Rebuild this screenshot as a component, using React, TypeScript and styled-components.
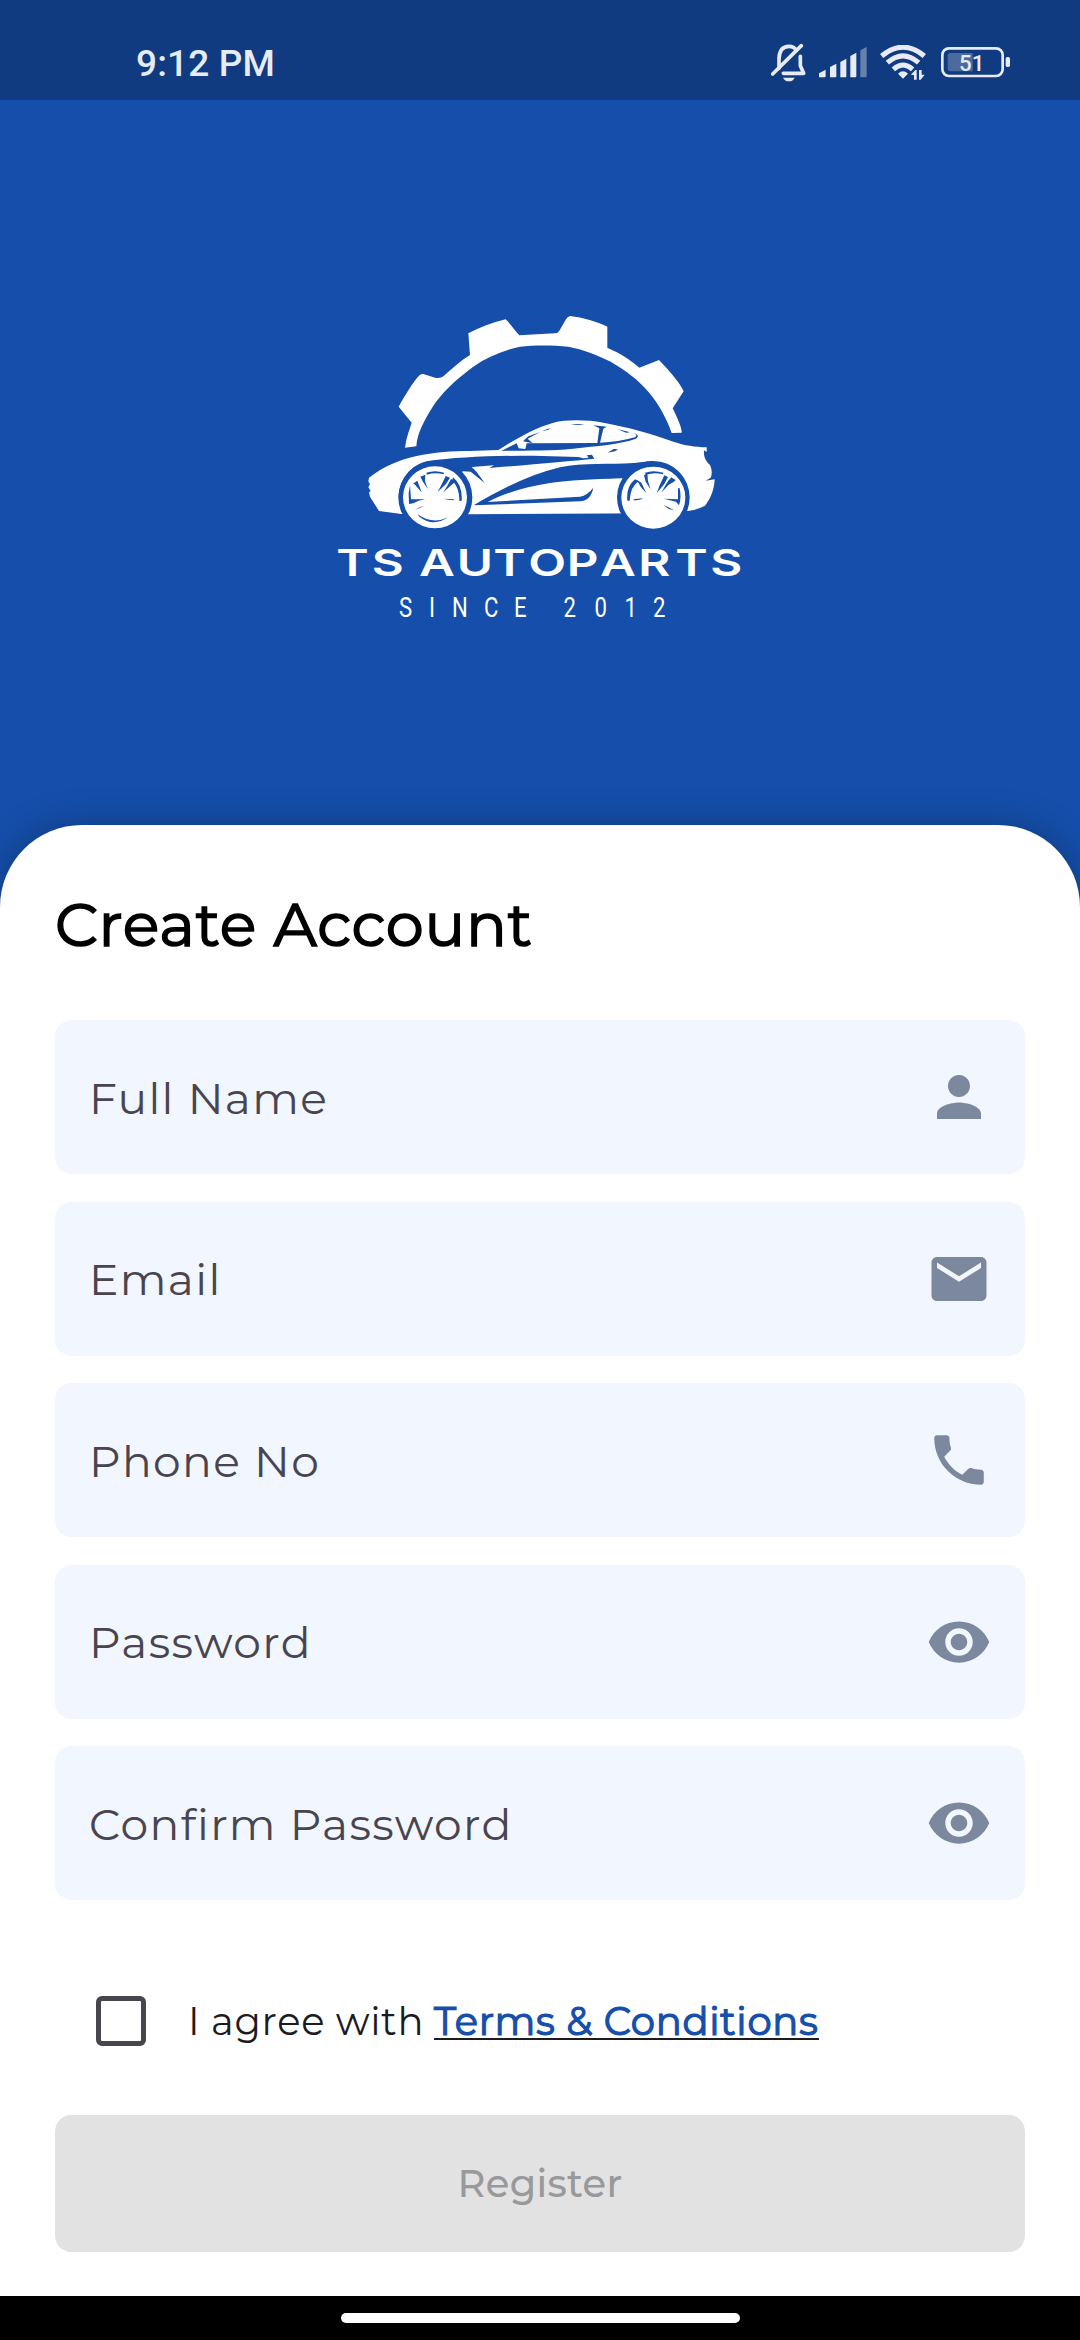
import React from "react";
import styled, { createGlobalStyle } from "styled-components";
import { MdPerson, MdEmail, MdPhone, MdRemoveRedEye } from "react-icons/md";
import type { IconType } from "react-icons";

const GlobalStyle = createGlobalStyle`
  *, *::before, *::after { box-sizing: border-box; }
  body {
    margin: 0;
    background: #154fab;
    font-family: Montserrat, Inter, "Liberation Sans", sans-serif;
  }
`;

const Screen = styled.div`
  display: flex;
  flex-direction: column;
  width: 1080px;
  height: 2340px;
  overflow: hidden;
  background: #154fab;
`;

const StatusBar = styled.header`
  display: flex;
  flex: none;
  align-items: center;
  justify-content: space-between;
  height: 100px;
  padding: 24px 70px 0 136px;
  background: #103b80;
  color: #e7ebf3;
`;

const Clock = styled.time`
  padding-top: 3px;
  font: 500 37px/44px Roboto, sans-serif;
  letter-spacing: 0.15px;
`;

const StatusIcons = styled.div`
  display: flex;
  align-items: center;
  svg { display: block; }
`;

const Hero = styled.div`
  flex: none;
  display: flex;
  justify-content: center;
  height: 725px;
  padding-top: 200px;
`;

const Sheet = styled.main`
  flex: 1;
  display: flex;
  flex-direction: column;
  padding: 0 55px;
  border-radius: 82px 82px 0 0;
  background: #fff;
  box-shadow: 0 0 36px rgba(0, 0, 0, 0.27);
`;

const Title = styled.h1`
  margin: 61px 0 58px;
  height: 76px;
  font-size: 60.5px;
  font-weight: 400;
  line-height: 76px;
  letter-spacing: 0.72px;
  color: #000;
  -webkit-text-stroke: 1.6px #000;
  white-space: nowrap;
`;

const Fields = styled.div`
  display: flex;
  flex-direction: column;
  gap: 27.5px;
`;

const Field = styled.div`
  display: flex;
  align-items: center;
  justify-content: space-between;
  height: 154px;
  padding: 1.4px 33px 0 34px;
  border-radius: 16.5px;
  background: #f1f6ff;
  svg { width: 66px; height: 66px; margin-top: -1.4px; color: #7b889e; }
`;

const FieldLabel = styled.span`
  font-size: 44px;
  font-weight: 400;
  line-height: 54px;
  letter-spacing: 1.375px;
  color: #49454f;
  white-space: nowrap;
`;

const Agreement = styled.div`
  display: flex;
  align-items: center;
  height: 50px;
  margin: 96px 0 0 41px;
`;

const Checkbox = styled.span`
  flex: none;
  width: 50px;
  height: 50px;
  border: 5.5px solid #49454f;
  border-radius: 6px;
`;

const AgreeText = styled.span`
  width: 246px;
  margin-left: 42px;
  padding-top: 2px;
  font-size: 38.5px;
  font-weight: 400;
  line-height: 50px;
  letter-spacing: 0.6875px;
  color: #1c1b1f;
  white-space: nowrap;
`;

const TermsLink = styled.a`
  height: 41px;
  margin-bottom: 3px;
  border-bottom: 2px solid #1c1b1f;
  font-size: 38.5px;
  font-weight: 400;
  line-height: 46px;
  letter-spacing: 0.72px;
  color: #154fab;
  -webkit-text-stroke: 1.2px #154fab;
  white-space: nowrap;
`;

const RegisterButton = styled.button`
  height: 137.5px;
  margin-top: 68.5px;
  padding: 2px 0 0;
  border: 0;
  border-radius: 16.5px;
  background: #e2e2e2;
  color: #98999a;
  font: 500 38.5px/50px Montserrat, Inter, sans-serif;
  letter-spacing: 0.275px;
`;

const NavBar = styled.footer`
  flex: none;
  display: flex;
  justify-content: center;
  height: 44px;
  padding-top: 17px;
  background: #000;
`;

const NavPill = styled.div`
  width: 399px;
  height: 10px;
  border-radius: 5px;
  background: #fff;
`;

const BLUE = "#154fab";

function BellOff() {
  return (
    <svg width="36" height="39" viewBox="0 0 108 117" fill="none">
      <path d="M24 76V48Q25 10 54 10Q69 10 76 22M88 40V68L98 91H37" stroke="#e7ebf3" strokeWidth="11" strokeLinejoin="round" strokeLinecap="round" />
      <path d="M5 93L91 8" stroke="#e7ebf3" strokeWidth="11" strokeLinecap="round" />
      <path d="M36 104H71Q66 115 54 115Q41 115 36 104Z" fill="#e7ebf3" />
    </svg>
  );
}

function Signal() {
  return (
    <svg width="48" height="31" viewBox="0 0 144 93" fill="#e7ebf3">
      <path d="M0 91V79L20 68V88Q20 91 17 91ZM33 91V60L52 50V88Q52 91 49 91ZM64 91V45L82 35V88Q82 91 79 91ZM94 91V27L112 17V88Q112 91 109 91Z" />
      <path d="M124 91V10L143 0V88Q143 91 140 91Z" opacity=".4" />
    </svg>
  );
}

function Wifi() {
  return (
    <svg width="46" height="35" viewBox="0 0 138 105" fill="none" stroke="#e7ebf3" strokeWidth="15">
      <path d="M5 33Q69 -20 133 33" />
      <path d="M22 53Q69 12 116 53" />
      <path d="M40 73Q69 47 98 73" />
      <path d="M54 86Q69 72 84 86L69 101Z" fill="#e7ebf3" stroke="none" />
      <path d="M94 88L106 75H110V104H102V90H94ZM117 75H125V89H134L122 104H117Z" fill="#e7ebf3" stroke="none" />
    </svg>
  );
}

function Battery() {
  return (
    <svg width="69" height="31" viewBox="0 0 207 93">
      <rect x="4" y="4" width="181" height="83" rx="20" fill="none" stroke="#e7ebf3" strokeWidth="8" />
      <path d="M29 18H95V73H29Q20 73 20 64V27Q20 18 29 18Z" fill="#4c6a9e" />
      <rect x="194" y="30" width="13" height="30" rx="5" fill="#e7ebf3" />
      <text x="92" y="71" textAnchor="middle" fontFamily="Roboto, sans-serif" fontSize="67" fontWeight="500" fill="#e7ebf3">51</text>
    </svg>
  );
}

const NAME_SCALE = 1.32;
const nameX = [49, 155, 250, 297, 410, 520, 625, 740, 840, 955, 1066, 1171].map((v) => v / NAME_SCALE).join(" ");
const SINCE_SCALE = 0.8;
const sinceX = [257, 336, 420, 514, 601, 675, 749, 842, 932, 1018].map((v) => v / SINCE_SCALE).join(" ");

function Logo() {
  return (
    <svg width="440" height="330" viewBox="0 0 1320 990" fill="#fff">
      <path d="M255 443L289 439C292 400 310 365 345 310C380 262 420 230 460 200C500 172 545 152 600 140C640 135 700 135 745 140C790 148 830 165 872 185C920 213 955 240 985 275C1015 310 1040 355 1055 399L1085 398C1086 385 1075 360 1058 325L1091 274C1075 240 1040 205 1017 180L958 203C930 178 900 160 862 143V80C830 65 790 52 750 48Q742 50 738 58L718 92Q713 100 705 100L598 106C585 92 572 72 557 58C515 68 480 82 445 100L450 165C420 183 395 208 372 227Q362 236 345 233L310 222Q302 221 297 227C280 245 255 285 236 320L275 368C268 390 258 415 255 443Z" />
      <path d="M147 533C190 500 240 478 290 468C340 457 400 453 450 453L535 450C580 422 640 385 700 368C740 358 800 359 850 368C920 380 1000 403 1060 425C1095 437 1125 440 1160 442V456L1152 451C1150 470 1158 485 1170 495C1177 510 1176 525 1172 533L1157 542L1184 538C1183 570 1170 600 1155 617Q1130 630 1104 633L1000 640L443 643L245 642L177 633L150 590L147 577L152 573L145 562L150 552L145 545Z" />

      <g fill={BLUE}>
        <ellipse cx="346" cy="592" rx="111" ry="111" />
        <ellipse cx="1000" cy="592" rx="109" ry="109" />
        <path d="M236 592C238 530 285 486 330 483C400 472 520 467 640 467L775 471L790 475L806 473L800 466L816 464L823 476C750 483 640 493 508 504L522 496L455 501L470 516L494 549L452 515L428 514L390 570Z" />
        <path d="M461 616C540 568 625 525 720 502C790 487 870 494 940 489C970 486 985 483 1000 483L1000 540L902 535C810 538 750 541 690 549C620 560 560 577 503 606L780 590Q802 586 820 563Q812 602 780 604Z" />
        <path d="M545 452L590 430L596 445L616 447L620 430L832 429L838 385L820 376L860 380L850 386L840 428Q895 426 945 412Q955 404 940 398Q962 406 948 416C900 433 830 438 760 446C690 453 610 451 545 453Z" />
        <path d="M609 424L625 409L661 396L631 412L623 416L638 430Z" />
        <path d="M666 393L691 384L684 390ZM752 373Q772 371 793 374Q772 376 752 373ZM893 387L930 397L918 398ZM863 458L881 447L894 448L885 454Z" />
      </g>

      <ellipse cx="345" cy="592" rx="96" ry="93" />
      <ellipse cx="1000" cy="593" rx="96" ry="93" />

      <g fill={BLUE}>
        <path d="M267 612L266 580L270 556L273 598L316 598Q294 601 280 610ZM279 551L292 542L305 577L290 560Q284 550 279 551ZM301 530L316 524L315 544L324 568L309 545ZM319 518Q345 509 372 518L371 523Q345 516 321 524ZM377 528L390 533L378 552L353 576L366 551ZM393 537L408 543L391 558L370 577L382 557ZM399 532Q428 555 425 603L418 602Q419 565 397 542ZM371 596L403 598L400 601Q384 600 371 596ZM283 630L313 616L300 624ZM293 643Q338 675 384 652Q340 682 298 650Z" />
        <path d="M922 602Q918 560 945 538L956 544Q931 560 929 602ZM950 539L964 548L979 580L962 560ZM972 526L982 520L984 544L992 568L977 545ZM975 518Q1000 509 1030 518L1029 523Q1000 515 978 525ZM1033 526L1044 531L1033 552L1010 580L1019 556ZM1048 538L1062 545L1046 554L1025 577L1037 554ZM1053 532L1067 540L1060 547L1048 543ZM1074 564L1079 565Q1085 595 1077 616L1068 605L1032 596L1074 598ZM940 598L969 595Q960 601 942 601ZM1030 614L1063 631L1046 627Z" />
      </g>

      <text transform={`scale(${NAME_SCALE} 1)`} x={nameX} y="828" fontFamily="Inter, sans-serif" fontSize="112" fontWeight="600" style={{ fontKerning: "none" }}>TS AUTOPARTS</text>
      <text transform={`scale(${SINCE_SCALE} 1)`} x={sinceX} y="951" textAnchor="middle" fontFamily="Roboto, sans-serif" fontSize="83">SINCE 2012</text>
    </svg>
  );
}

const fields: { label: string; Icon: IconType }[] = [
  { label: "Full Name", Icon: MdPerson },
  { label: "Email", Icon: MdEmail },
  { label: "Phone No", Icon: MdPhone },
  { label: "Password", Icon: MdRemoveRedEye },
  { label: "Confirm Password", Icon: MdRemoveRedEye },
];

const Gap = styled.span<{ $w: number }>`
  width: ${(p) => p.$w}px;
`;

export default function App() {
  return (
    <Screen>
      <GlobalStyle />
      <StatusBar>
        <Clock>9:12 PM</Clock>
        <StatusIcons>
          <BellOff />
          <Gap $w={12} />
          <Signal />
          <Gap $w={13} />
          <Wifi />
          <Gap $w={15} />
          <Battery />
        </StatusIcons>
      </StatusBar>
      <Hero>
        <Logo />
      </Hero>
      <Sheet>
        <Title>Create Account</Title>
        <Fields>
          {fields.map(({ label, Icon }) => (
            <Field key={label}>
              <FieldLabel>{label}</FieldLabel>
              <Icon />
            </Field>
          ))}
        </Fields>
        <Agreement>
          <Checkbox role="checkbox" aria-checked="false" />
          <AgreeText>I agree with</AgreeText>
          <TermsLink>Terms &amp; Conditions</TermsLink>
        </Agreement>
        <RegisterButton disabled>Register</RegisterButton>
      </Sheet>
      <NavBar>
        <NavPill />
      </NavBar>
    </Screen>
  );
}
